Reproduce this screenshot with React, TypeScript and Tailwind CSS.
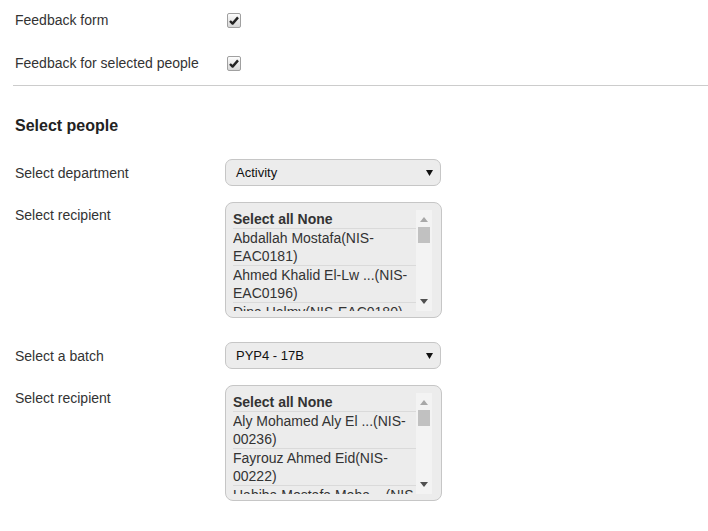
import React from "react";

const font = { fontFamily: '"Liberation Sans", Arial, sans-serif' };

function Check() {
  return (
    <div className="w-[14px] h-[15px] rounded-[2px] border border-[#a0a0a0] bg-gradient-to-b from-[#fdfdfd] to-[#d6d6d6] flex items-center justify-center">
      <svg width="10" height="9" viewBox="0 0 10 9">
        <path d="M1 5 L3.6 7.6 L9 1.4" fill="none" stroke="#222" strokeWidth="2.4" strokeLinejoin="round" />
      </svg>
    </div>
  );
}

function Select({ value }: { value: string }) {
  return (
    <div className="w-[216px] h-[27px] rounded-[7px] border border-[#c6c6c6] bg-[#ececec] flex items-center justify-between pl-[10px] pr-[7px] text-[13px] text-[#111]">
      <span>{value}</span>
      <svg width="7" height="6" viewBox="0 0 7 6">
        <path d="M0 0 H7 L3.5 6 Z" fill="#111" />
      </svg>
    </div>
  );
}

function ListBox({ items }: { items: string[][] }) {
  return (
    <div className="w-[217px] h-[116px] rounded-[8px] border border-[#c6c6c6] bg-[#ececec] pt-[7px] pl-[7px] pr-[9px]">
      <div className="flex h-[101px]">
        <div className="flex-1 overflow-hidden text-[14px] leading-[18px] text-[#333]">
          <div className="font-bold border-b border-[#dadada]">Select all None</div>
          {items.map((lines, i) => (
            <div key={i} className="border-b border-[#dadada] whitespace-nowrap">
              {lines.map((l) => (
                <div key={l}>{l}</div>
              ))}
            </div>
          ))}
        </div>
        <div className="w-[16px] bg-[#f3f3f3] flex flex-col items-center">
          <svg className="mt-[7px]" width="8" height="5" viewBox="0 0 8 5">
            <path d="M0 5 H8 L4 0 Z" fill="#a8a8a8" />
          </svg>
          <div className="mt-[5px] w-[12px] h-[16px] bg-[#c1c1c1]" />
          <div className="flex-1" />
          <svg className="mb-[7px]" width="8" height="5" viewBox="0 0 8 5">
            <path d="M0 0 H8 L4 5 Z" fill="#505050" />
          </svg>
        </div>
      </div>
    </div>
  );
}

export default function App() {
  return (
    <div className="min-h-screen bg-white text-[#333] text-[14px] leading-[18px]" style={font}>
      <div className="pl-[15px] pt-[7px]">
        <div className="flex items-center h-[26px]">
          <div className="w-[212px]">Feedback form</div>
          <Check />
        </div>
        <div className="flex items-center h-[26px] mt-[17px]">
          <div className="w-[212px]">Feedback for selected people</div>
          <Check />
        </div>
      </div>
      <div className="ml-[13px] mt-[9px] border-t border-[#cccccc]" />
      <div className="pl-[15px]">
        <h2 className="mt-[30px] text-[16px] leading-[20px] font-bold text-[#222]">Select people</h2>
        <div className="flex items-center mt-[23px]">
          <div className="w-[210px]">Select department</div>
          <Select value="Activity" />
        </div>
        <div className="flex mt-[16px]">
          <div className="w-[210px] pt-[4px]">Select recipient</div>
          <ListBox
            items={[
              ["Abdallah Mostafa(NIS-", "EAC0181)"],
              ["Ahmed Khalid El-Lw ...(NIS-", "EAC0196)"],
              ["Dina Helmy(NIS-EAC0180)"],
            ]}
          />
        </div>
        <div className="flex items-center mt-[24px]">
          <div className="w-[210px]">Select a batch</div>
          <Select value="PYP4 - 17B" />
        </div>
        <div className="flex mt-[16px]">
          <div className="w-[210px] pt-[4px]">Select recipient</div>
          <ListBox
            items={[
              ["Aly Mohamed Aly El ...(NIS-", "00236)"],
              ["Fayrouz Ahmed Eid(NIS-", "00222)"],
              ["Habiba Mostafa Moha ...(NIS-", "00230)"],
            ]}
          />
        </div>
      </div>
    </div>
  );
}
